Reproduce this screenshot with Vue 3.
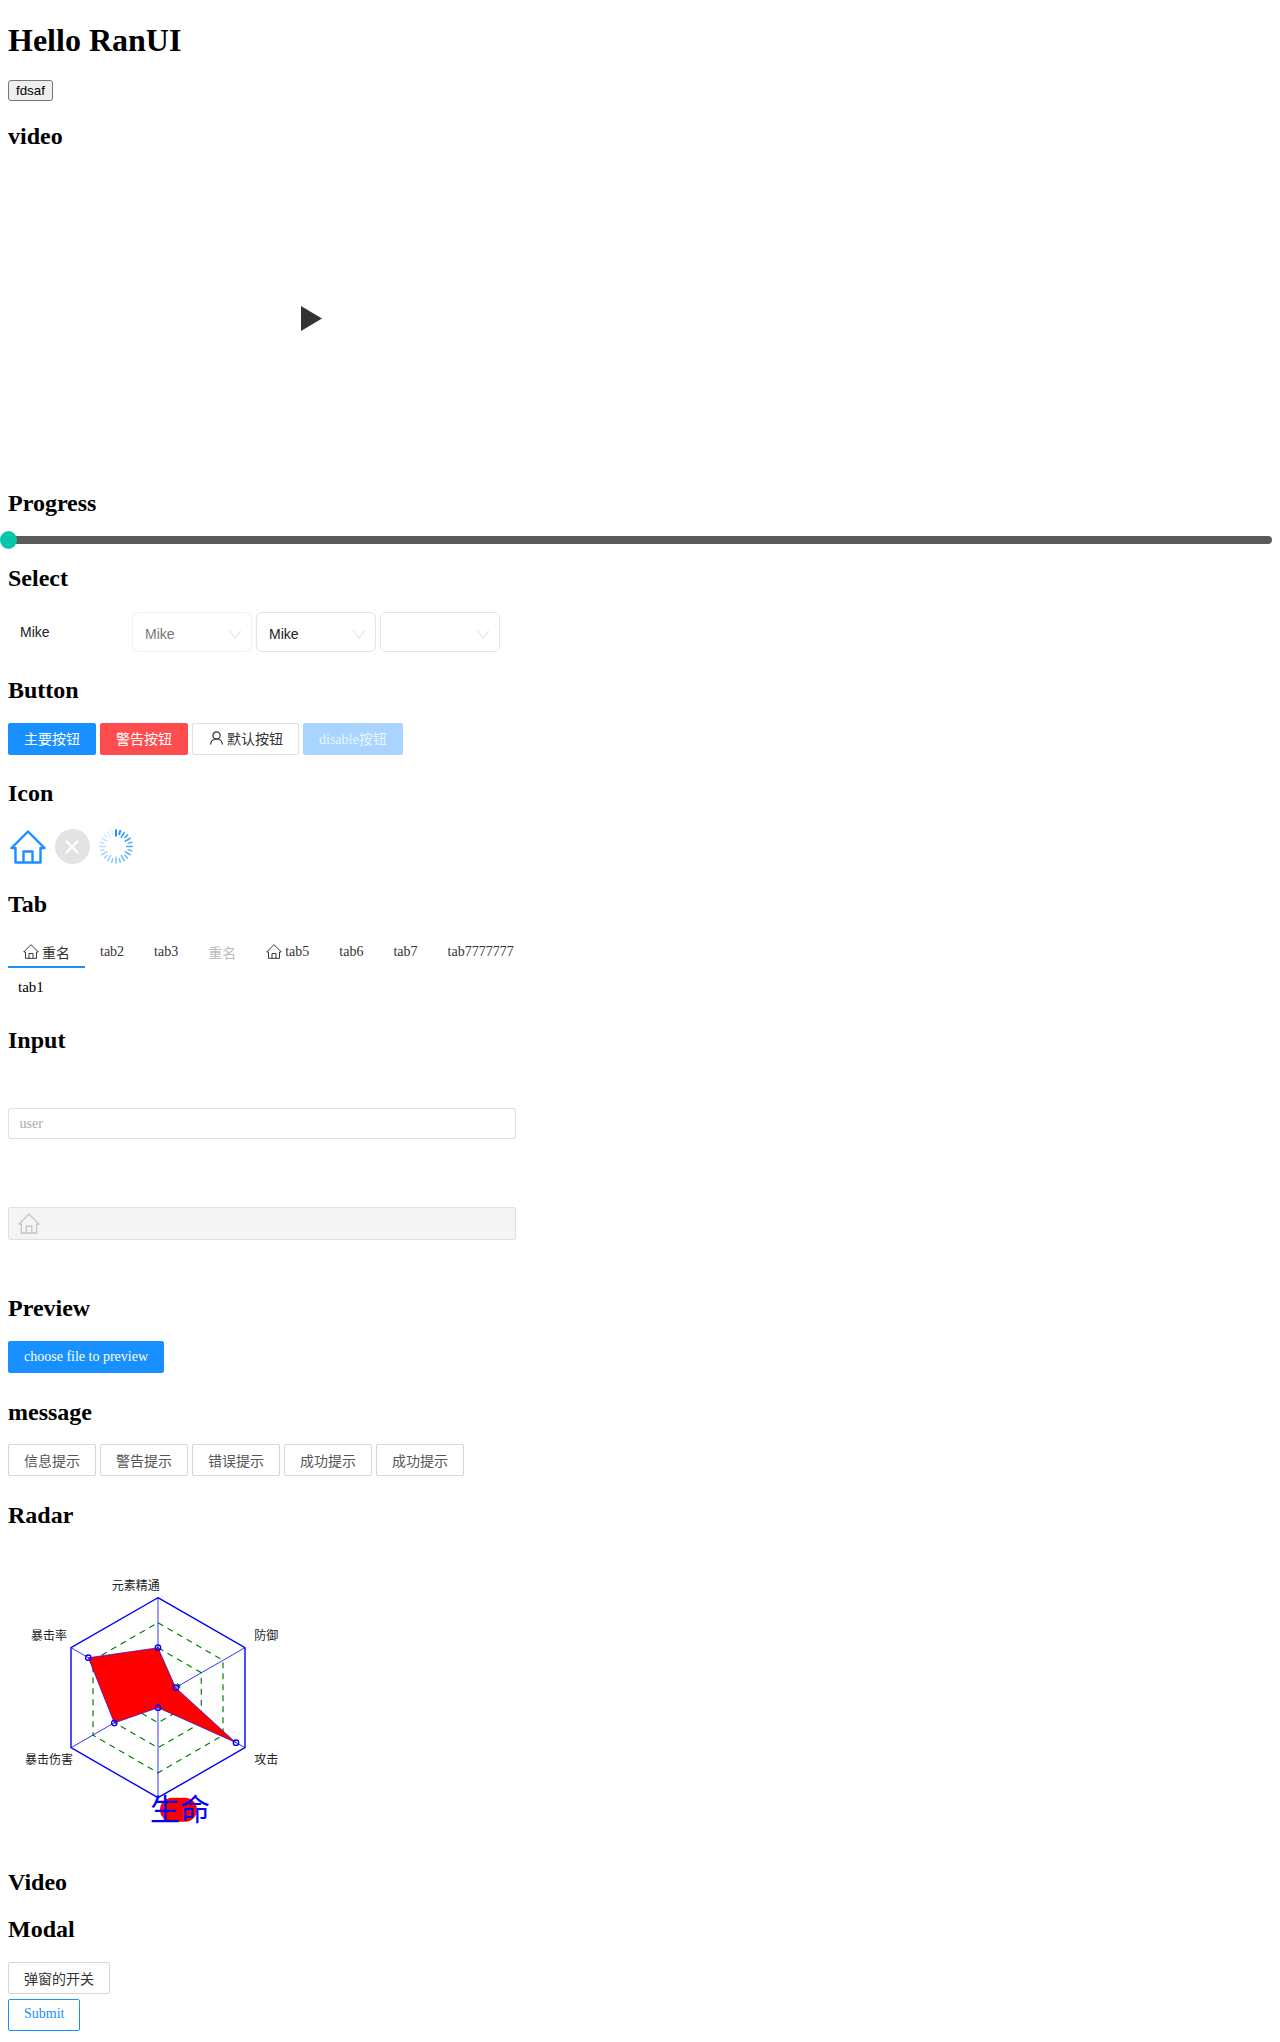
<template>
  <div class="page">
    <h1>Hello RanUI</h1>
    <div class="native-line">
      <button class="native">fdsaf</button>
    </div>

    <h2>video</h2>
    <div class="video">
      <svg class="play" viewBox="0 0 21 25" width="21" height="25"><path d="M0 0 L21 12.5 L0 25 Z" fill="#333" /></svg>
    </div>

    <h2>Progress</h2>
    <div class="progress"><span class="dot"></span></div>

    <h2 class="select-h">Select</h2>
    <div class="selects">
      <div class="sel-plain">Mike</div>
      <div class="sel light"><span class="muted">Mike</span><svg class="chev" viewBox="0 0 12 9"><path d="M.5 .5 L6 8.5 L11.5 .5" /></svg></div>
      <div class="sel"><span>Mike</span><svg class="chev" viewBox="0 0 12 9"><path d="M.5 .5 L6 8.5 L11.5 .5" /></svg></div>
      <div class="sel"><span></span><svg class="chev" viewBox="0 0 12 9"><path d="M.5 .5 L6 8.5 L11.5 .5" /></svg></div>
    </div>

    <h2>Button</h2>
    <div class="row">
      <div class="btn primary">主要按钮</div>
      <div class="btn warning">警告按钮</div>
      <div class="btn">
        <svg class="user" viewBox="0 0 16 16"><circle cx="8.5" cy="5.5" r="3.6" /><path d="M2.5 14.5 C3 10.5 5.5 9 8.5 9 C11.5 9 14 10.5 14.5 14.5" /></svg>
        默认按钮
      </div>
      <div class="btn disabled">disable按钮</div>
    </div>

    <h2>Icon</h2>
    <div class="icons">
      <svg class="home-big" viewBox="0 0 36 34" width="36" height="34"><path d="M1.5 18 L18 1.5 L34.5 18 L30.5 18 L30.5 32.5 L5.5 32.5 L5.5 18 Z M13.5 32.5 L13.5 21.5 L22.5 21.5 L22.5 32.5" /></svg>
      <div class="close-ic">
        <svg viewBox="0 0 14 14" width="14" height="14"><path d="M1 1 L13 13 M13 1 L1 13" /></svg>
      </div>
      <svg class="spin" viewBox="0 0 34 35" width="34" height="35">
        <line v-for="t in ticks" :key="t.a" x1="17" y1="0.5" x2="17" :y2="t.y2" :stroke-opacity="t.o" :stroke-width="t.w" :transform="`rotate(${t.a} 17 17.5)`" />
      </svg>
    </div>

    <h2>Tab</h2>
    <div class="tabs">
      <div class="tab active">
        <svg class="home-sm" viewBox="0 0 36 34"><path d="M1.5 18 L18 1.5 L34.5 18 L30.5 18 L30.5 32.5 L5.5 32.5 L5.5 18 Z M13.5 32.5 L13.5 21.5 L22.5 21.5 L22.5 32.5" /></svg>
        重名
      </div>
      <div class="tab">tab2</div>
      <div class="tab">tab3</div>
      <div class="tab off">重名</div>
      <div class="tab">
        <svg class="home-sm" viewBox="0 0 36 34"><path d="M1.5 18 L18 1.5 L34.5 18 L30.5 18 L30.5 32.5 L5.5 32.5 L5.5 18 Z M13.5 32.5 L13.5 21.5 L22.5 21.5 L22.5 32.5" /></svg>
        tab5
      </div>
      <div class="tab">tab6</div>
      <div class="tab">tab7</div>
      <div class="tab">tab7777777</div>
    </div>
    <div class="tab-body">tab1</div>

    <h2>Input</h2>
    <div class="input-wrap">
      <div class="input"><input placeholder="user" /></div>
    </div>
    <div class="input-wrap second">
      <div class="input off">
        <svg class="home-in" viewBox="0 0 36 34"><path d="M1.5 18 L18 1.5 L34.5 18 L30.5 18 L30.5 32.5 L5.5 32.5 L5.5 18 Z M13.5 32.5 L13.5 21.5 L22.5 21.5 L22.5 32.5" /></svg>
      </div>
    </div>

    <h2 class="preview-h">Preview</h2>
    <div class="row">
      <div class="btn primary">choose file to preview</div>
    </div>

    <h2>message</h2>
    <div class="row">
      <div class="btn msg" v-for="m in messages" :key="m.id">{{ m.text }}</div>
    </div>

    <h2>Radar</h2>
    <svg class="radar" viewBox="8 -1.7 300 300" width="300" height="300">
      <polygon points="158,47 245,97 245,197 158,247 71,197 71,97" fill="none" stroke="#00f" stroke-width="1.4" />
      <g fill="none" stroke="green" stroke-width="1.2" stroke-dasharray="6 5">
        <polygon points="158,72 223,109.5 223,184.5 158,222 93,184.5 93,109.5" />
        <polygon points="158,97 201.3,122 201.3,172 158,197 114.7,172 114.7,122" />
        <polygon points="158,122 179.65,134.5 179.65,159.5 158,172 136.35,159.5 136.35,134.5" />
      </g>
      <line x1="158" y1="47" x2="158" y2="247" stroke="#00f" stroke-opacity=".55" stroke-width="1.4" />
      <line x1="71" y1="97" x2="245" y2="197" stroke="#00f" stroke-width=".8" />
      <line x1="71" y1="197" x2="245" y2="97" stroke="#00f" stroke-width=".8" />
      <polygon points="158,97 175.7,137 236,192 158,157 114.3,172.3 88.3,107" fill="#f00" stroke="#00f" stroke-width=".6" />
      <g fill="none" stroke="#00f" stroke-width="1.3">
        <circle cx="158" cy="97" r="2.7" />
        <circle cx="175.7" cy="137" r="2.7" />
        <circle cx="236" cy="192" r="2.7" />
        <circle cx="158" cy="157" r="2.7" />
        <circle cx="114.3" cy="172.3" r="2.7" />
        <circle cx="88.3" cy="107" r="2.7" />
      </g>
      <g class="labels">
        <text x="111.7" y="39">元素精通</text>
        <text x="254.3" y="89.5">防御</text>
        <text x="254.3" y="213">攻击</text>
        <text x="25" y="213">暴击伤害</text>
        <text x="31" y="89.5">暴击率</text>
      </g>
      <rect x="160" y="247" width="37" height="24" rx="12" fill="#f00" />
      <text class="life" x="150" y="269">生命</text>
    </svg>

    <h2>Video</h2>
    <h2 class="modal-h">Modal</h2>
    <div class="btn msg big">弹窗的开关</div>
    <div class="btn submit">Submit</div>
  </div>
</template>

<script setup>
// spinner ticks, fading clockwise from the top
const ticks = Array.from({ length: 24 }, (_, i) => ({
  a: i * 15,
  y2: i % 2 ? 5.5 : 7.5,
  o: Math.max(0.15, 1 - i / 26),
  w: i < 2 ? 2 : 1.5
}))

const messages = [
  { id: 1, text: '信息提示' },
  { id: 2, text: '警告提示' },
  { id: 3, text: '错误提示' },
  { id: 4, text: '成功提示' },
  { id: 5, text: '成功提示' }
]
</script>

<style>
body {
  margin: 0;
  background: #fff;
  font-family: "Liberation Serif", "Noto Sans CJK SC", serif;
  color: #000;
}
</style>

<style scoped>
.page {
  padding: 0 8px 8px;
  overflow: hidden;
}

h1 {
  font-size: 32px;
  margin: 22.44px 0 20.44px;
}

h2 {
  font-size: 24px;
  line-height: 27px;
  margin: 19.92px 0;
}

.native-line {
  height: 23.6px;
}

.native {
  display: block;
  font-family: "Liberation Sans", sans-serif;
  font-size: 13.33px;
  height: 21px;
  padding: 1px 7px;
  border: 1px solid #767676;
  border-radius: 3px;
  background: #efefef;
  color: #000;
}

.video {
  height: 300px;
  width: 607px;
  box-sizing: border-box;
  padding-bottom: 3.4px;
  display: flex;
  align-items: center;
  justify-content: center;
}

.progress {
  position: relative;
  height: 8px;
  margin-top: -1px;
  border-radius: 4px;
  background: #5a5a5a;
}

.dot {
  position: absolute;
  left: -8px;
  top: -5px;
  width: 17px;
  height: 18px;
  border-radius: 50%;
  background: #06c8a6;
}

.select-h {
  margin-top: 20.92px;
}

.selects {
  display: flex;
  gap: 4px;
  height: 44.8px;
  box-sizing: border-box;
  padding-top: 0.5px;
  font-family: "Liberation Sans", sans-serif;
  font-size: 14px;
}

.sel-plain {
  width: 120px;
  box-sizing: border-box;
  padding: 12px 0 0 12px;
  color: #222;
}

.sel {
  width: 120px;
  height: 40px;
  box-sizing: border-box;
  border: 1px solid #e4e4e4;
  border-radius: 6px;
  padding: 13px 10px 0 12px;
  display: flex;
  justify-content: space-between;
  color: #222;
}

.sel.light {
  border-color: #f0f0f0;
}

.muted {
  color: #777;
}

.chev {
  width: 12px;
  height: 9px;
  margin-top: 4px;
  fill: none;
  stroke: #ddd;
  stroke-width: 1;
}

.row {
  display: flex;
  gap: 4px;
  height: 37.4px;
  margin-top: -1px;
}

.btn {
  display: flex;
  align-items: center;
  justify-content: center;
  height: 32px;
  box-sizing: border-box;
  padding: 0 15px 1px;
  font-size: 14px;
  border: 1px solid #e0e0e0;
  border-radius: 2px;
  color: #333;
  background: #fff;
  width: max-content;
}

.primary {
  background: #1890ff;
  border-color: #1890ff;
  color: #fff;
}

.warning {
  background: #ff4d4f;
  border-color: #ff4d4f;
  color: #fff;
}

.disabled {
  background: #a8d4ff;
  border-color: #a8d4ff;
  color: #eaf5ff;
}

.user {
  width: 16px;
  height: 16px;
  margin-right: 3px;
  fill: none;
  stroke: #333;
  stroke-width: 1.2;
}

.icons {
  display: flex;
  align-items: flex-start;
  height: 44.2px;
  box-sizing: border-box;
  padding-top: 2.3px;
}

.home-big {
  fill: none;
  stroke: #1890ff;
  stroke-width: 2.4;
  stroke-linejoin: round;
  margin: 1px 0 0 2px;
}

.close-ic {
  width: 35px;
  height: 35px;
  margin-left: 8.7px;
  border-radius: 50%;
  background: #e3e3e3;
  display: flex;
  align-items: center;
  justify-content: center;
}

.close-ic svg {
  fill: none;
  stroke: #fff;
  stroke-width: 2;
}

.spin {
  margin-left: 9.4px;
  stroke: #1890ff;
}

.tabs {
  display: flex;
  font-size: 14px;
  color: #333;
}

.tab {
  height: 30.5px;
  padding: 0 15px 2px;
  display: flex;
  align-items: center;
  white-space: nowrap;
  box-sizing: border-box;
}

.tab.active {
  padding-bottom: 0;
  border-bottom: 2px solid #1890ff;
}

.tab.off {
  color: #bbb;
}

.home-sm {
  width: 16px;
  height: 15px;
  margin-right: 3px;
  flex: none;
  fill: none;
  stroke: #333;
  stroke-width: 2.2;
  stroke-linejoin: round;
}

.tab-body {
  height: 39.3px;
  display: flex;
  align-items: center;
  padding-left: 10px;
  font-size: 15px;
}

.input-wrap {
  width: 507.5px;
  padding-top: 33.7px;
}

.input-wrap.second {
  padding-top: 68.3px;
}

.input {
  height: 31px;
  box-sizing: border-box;
  border: 1px solid #e0e0e0;
  border-radius: 2px;
  display: flex;
  align-items: center;
}

.input input {
  border: 0;
  outline: 0;
  padding: 0 10.5px;
  width: 100%;
  background: transparent;
  font: 14px "Liberation Serif", serif;
}

.input input::placeholder {
  color: #aaa;
}

.input.off {
  height: 33px;
  background: #f4f4f4;
}

.home-in {
  width: 22px;
  height: 21px;
  margin-left: 9px;
  fill: none;
  stroke: #c4c4c4;
  stroke-width: 2.2;
  stroke-linejoin: round;
}

.preview-h {
  margin-top: 55px;
}

.msg {
  border-color: #d6d6d6;
  color: #555;
}

.big {
  color: #333;
}

.submit {
  margin-top: 4.5px;
  border-color: #1890ff;
  color: #1890ff;
}

.radar {
  display: block;
}

.labels text {
  font-size: 12px;
  fill: #222;
}

.life {
  font-size: 30px;
  fill: #00f;
}

.modal-h {
  margin: 20.92px 0 18.92px;
}
</style>
